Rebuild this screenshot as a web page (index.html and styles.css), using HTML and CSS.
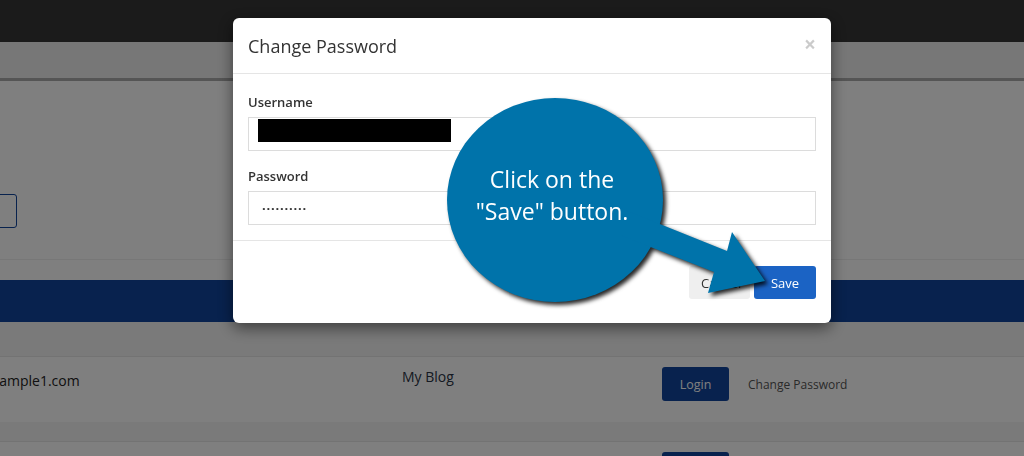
FILE: index.html
```html
<!DOCTYPE html>
<html lang="en">
<head>
<meta charset="utf-8">
<title>Change Password</title>
<link rel="stylesheet" href="styles.css">
</head>
<body>
<div class="page">
  <header class="topbar"></header>
  <nav class="subbar"></nav>
  <section class="toolbar">
    <button class="btn-outline" type="button" aria-label="Add site"></button>
  </section>
  <div class="sites">
    <div class="sites-head"></div>
    <div class="spacer spacer-lg"></div>
    <div class="site-row">
      <div class="cell cell-domain">example1.com</div>
      <div class="cell cell-title">My Blog</div>
      <div class="cell cell-actions">
        <button class="btn-login" type="button">Login</button>
        <span class="link">Change Password</span>
      </div>
    </div>
    <div class="spacer spacer-sm"></div>
    <div class="site-row">
      <div class="cell cell-domain"></div>
      <div class="cell cell-title"></div>
      <div class="cell cell-actions">
        <button class="btn-login" type="button">Login</button>
      </div>
    </div>
  </div>
</div>

<div class="backdrop"></div>

<div class="modal-layer">
  <div class="modal">
    <div class="modal-header">
      <h4 class="modal-title">Change Password</h4>
      <span class="close">&times;</span>
    </div>
    <div class="modal-body">
      <div class="form-group">
        <label class="label">Username</label>
        <div class="form-control"><span class="redacted"></span></div>
      </div>
      <div class="form-group last">
        <label class="label">Password</label>
        <div class="form-control"><span class="dots">··········</span></div>
      </div>
    </div>
    <div class="modal-footer">
      <button class="btn btn-default" type="button">Cancel</button>
      <button class="btn btn-primary" type="button">Save</button>
    </div>
  </div>
</div>

<div class="callout">
  <svg class="callout-shape" viewBox="0 0 1024 456" width="1024" height="456" aria-hidden="true">
    <g fill="#0073aa">
      <ellipse cx="555" cy="200" rx="108" ry="102"/>
      <polygon points="620,208 727,251 732,232 765,281 708,293 714,272 620,235"/>
    </g>
  </svg>
  <div class="callout-text">Click on the<br>"Save" button.</div>
</div>
</body>
</html>
```

FILE: styles.css
```css
* { box-sizing: border-box; }

html, body {
  margin: 0;
  padding: 0;
  width: 1024px;
  height: 456px;
  overflow: hidden;
  background: #fff;
  font-family: "Open Sans", "Liberation Sans", sans-serif;
  color: #333;
}

.page {
  width: 1024px;
  overflow: hidden;
}

.topbar {
  height: 42px;
  background: #363636;
}

.subbar {
  height: 39px;
  background: #eee;
  border-bottom: 3px solid #aaa;
}

.toolbar {
  height: 179px;
  border-bottom: 1px solid #eee;
  padding-top: 113px;
  margin-left: -60px;
}

.btn-outline {
  display: block;
  width: 77px;
  height: 34px;
  border: 1px solid #10449c;
  border-radius: 3px;
  background: #fff;
}

.sites {
  margin-top: 20px;
  margin-left: -16px;
}

.sites-head {
  height: 42px;
  background: #10449c;
}

.spacer {
  background: #f4f4f4;
  border-bottom: 1px solid #e6e6e6;
}
.spacer-lg { height: 35px; }
.spacer-sm { height: 20px; }

.site-row {
  display: flex;
  height: 65px;
  background: #fff;
}

.cell { font-size: 14px; }

.cell-domain {
  width: 418px;
  padding-top: 14px;
  line-height: 20px;
  color: #222;
}

.cell-title {
  width: 260px;
  padding-top: 10px;
  line-height: 20px;
  color: #2a3344;
}

.cell-actions {
  display: flex;
  align-items: center;
  align-self: flex-start;
  gap: 19px;
  padding-top: 10px;
}

.btn-login {
  width: 67px;
  height: 34px;
  border: 0;
  border-radius: 3px;
  background: #10449c;
  color: #fff;
  font-family: inherit;
  font-size: 12.5px;
}

.link {
  font-size: 12px;
  color: #555;
}

.backdrop {
  position: fixed;
  inset: 0;
  background: rgba(0, 0, 0, 0.5);
}

.modal-layer {
  position: fixed;
  inset: 0;
  padding: 18px 0 0 233px;
}

.modal {
  width: 598px;
  background: #fff;
  border-radius: 6px;
  box-shadow: 0 5px 15px rgba(0, 0, 0, 0.5);
}

.modal-header {
  display: flex;
  align-items: center;
  justify-content: space-between;
  height: 56px;
  padding: 0 15px;
  border-bottom: 1px solid #e5e5e5;
}

.modal-title {
  margin: 0;
  font-size: 18px;
  font-weight: 400;
  line-height: 26px;
  color: #333;
}

.close {
  font-size: 21px;
  font-weight: 700;
  line-height: 1;
  color: #000;
  opacity: 0.2;
  margin-top: -3px;
}

.modal-body {
  padding: 19px 15px 15px;
}

.form-group { margin-bottom: 16px; }
.form-group.last { margin-bottom: 0; }

.label {
  display: block;
  margin-bottom: 5px;
  font-size: 13px;
  font-weight: 600;
  line-height: 19px;
  color: #333;
}

.form-control {
  display: flex;
  align-items: center;
  height: 34px;
  border: 1px solid #dcdcdc;
  padding: 0 9px;
}

.redacted {
  display: block;
  width: 193px;
  height: 23px;
  margin-top: -8px;
  background: #000;
}

.dots {
  padding-left: 4px;
  font-size: 13px;
  letter-spacing: 0.8px;
  font-weight: 700;
  color: #333;
}

.modal-footer {
  display: flex;
  justify-content: flex-end;
  gap: 4px;
  padding: 25px 15px 24px;
  border-top: 1px solid #e5e5e5;
}

.btn {
  height: 33px;
  border: 0;
  border-radius: 3px;
  font-family: inherit;
  font-size: 13px;
  padding: 0 12px;
}

.btn-default {
  width: 61px;
  background: #efefef;
  color: #333;
}

.btn-primary {
  width: 62px;
  background: #1b63c4;
  color: #fff;
}

.callout {
  position: fixed;
  inset: 0;
  pointer-events: none;
}

.callout-shape {
  position: absolute;
  left: 0;
  top: 0;
  filter: drop-shadow(3px 3px 2px rgba(0, 0, 0, 0.85));
}

.callout-text {
  position: absolute;
  left: 444px;
  top: 163px;
  width: 216px;
  text-align: center;
  font-size: 23px;
  line-height: 32px;
  color: #fff;
}
```
